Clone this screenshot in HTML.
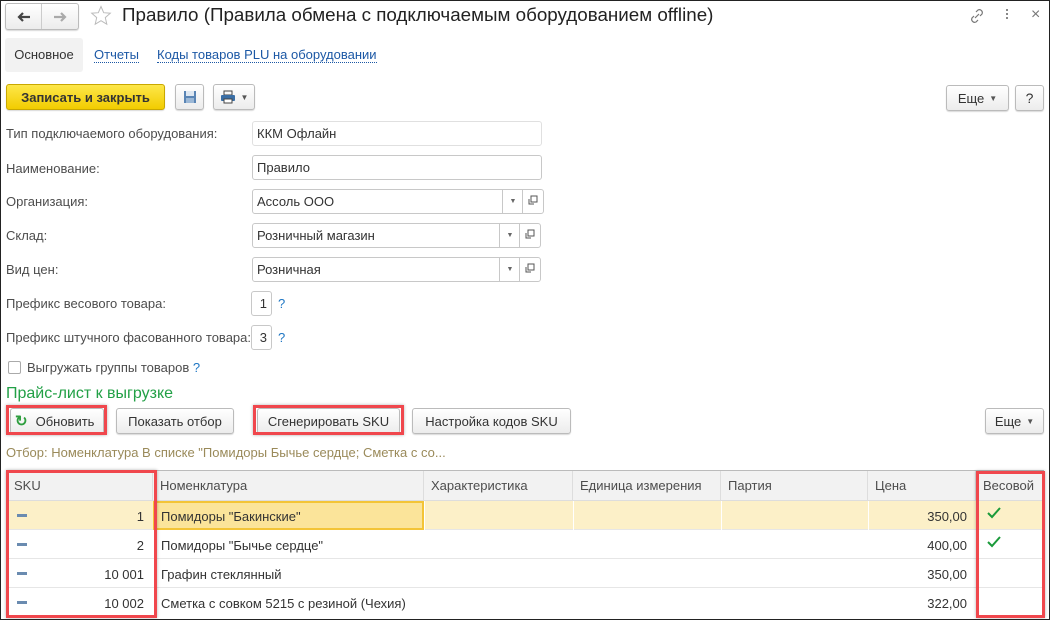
<!DOCTYPE html>
<html><head><meta charset="utf-8"><style>
*{box-sizing:border-box;margin:0;padding:0}
body{width:1050px;height:620px;overflow:hidden;background:#fff;font-family:"Liberation Sans",Arial,sans-serif;font-size:13px;color:#4d4d4d;position:relative}
.a{position:absolute;white-space:nowrap}
.frame{position:absolute;left:0;top:0;width:1050px;height:620px;border:1px solid #222;pointer-events:none;z-index:9}
.btn{position:absolute;height:26px;border:1px solid #bbb;border-radius:3px;background:linear-gradient(#fff,#ececec);box-shadow:0 1px 1px rgba(0,0,0,.15);display:flex;align-items:center;justify-content:center;color:#333;font-size:13px}
.inp{position:absolute;height:25px;border:1px solid #c8c8c8;border-radius:3px;background:#fff;padding-left:4px;line-height:23px;color:#333}
.dd{position:absolute;top:0;height:23px;border-left:1px solid #c8c8c8;width:21px}
.red{position:absolute;border:3px solid #f0474d;box-shadow:0 0 3px rgba(0,0,0,.3)}
.th{position:absolute;top:471px;height:30px;background:#f2f2f2;border-right:1px solid #ddd;border-bottom:1px solid #ddd;padding-left:7px;line-height:30px;color:#4d4d4d}
.row{position:absolute;left:7px;width:1037px;height:29px;border-bottom:1px solid #e6e6e6}
.q{color:#1f77c4}
.mark{position:absolute;left:17px;width:10px;height:3px;background:#6a8bb0}
</style></head><body>
<div class="frame"></div>
<!-- title bar -->
<div class="btn" style="left:5px;top:3px;width:74px;height:27px;padding:0"><span style="width:37px;height:25px;border-right:1px solid #ccc;display:flex;align-items:center;justify-content:center"><svg width="14" height="10" viewBox="0 0 14 10"><path d="M13 5H3M6 1L2 5l4 4" fill="none" stroke="#444" stroke-width="2.2"/></svg></span><span style="width:37px;display:flex;align-items:center;justify-content:center"><svg width="14" height="10" viewBox="0 0 14 10"><path d="M1 5h10M8 1l4 4-4 4" fill="none" stroke="#aaa" stroke-width="2.2"/></svg></span></div>
<svg class="a" style="left:90px;top:5px" width="22" height="22" viewBox="0 0 22 22"><path d="M11 1.5l2.7 6.2 6.6.5-5 4.4 1.5 6.6L11 15.7 5.2 19.2l1.5-6.6-5-4.4 6.6-.5z" fill="none" stroke="#bbb" stroke-width="1"/></svg>
<div class="a" style="left:122px;top:4px;font-size:18.8px;color:#222">Правило (Правила обмена с подключаемым оборудованием offline)</div>
<svg class="a" style="left:968px;top:7px" width="18" height="18" viewBox="0 0 18 18"><path d="M8 5l2-2a3 3 0 014 4l-2 2M10 13l-2 2a3 3 0 01-4-4l2-2M7 11l4-4" fill="none" stroke="#777" stroke-width="1.2"/></svg>
<div class="a" style="left:1006px;top:9px;width:3px"><div style="width:2px;height:2px;background:#888;margin-bottom:2px"></div><div style="width:2px;height:2px;background:#888;margin-bottom:2px"></div><div style="width:2px;height:2px;background:#888"></div></div>
<div class="a" style="left:1031px;top:6px;font-size:16px;color:#777">×</div>
<!-- tabs -->
<div class="a" style="left:5px;top:38px;width:78px;height:34px;background:#f2f2f2;border-radius:3px;line-height:34px;text-align:center;color:#333">Основное</div>
<div class="a" style="left:94px;top:48px;color:#1c58a5;border-bottom:1px dotted #1c58a5;line-height:14px">Отчеты</div>
<div class="a" style="left:157px;top:48px;color:#1c58a5;border-bottom:1px dotted #1c58a5;line-height:14px">Коды товаров PLU на оборудовании</div>
<!-- toolbar -->
<div class="btn" style="left:6px;top:84px;width:159px;background:linear-gradient(#fde74a,#f2cc00);border-color:#c9a800;font-weight:bold;color:#333">Записать и закрыть</div>
<div class="btn" style="left:175px;top:84px;width:29px"><svg width="14" height="14" viewBox="0 0 14 14"><rect x="1" y="1" width="12" height="12" fill="#5a85b5"/><rect x="3" y="1" width="8" height="5" fill="#dfe8f2"/><rect x="3" y="8" width="8" height="5" fill="#9cb8d6"/></svg></div>
<div class="btn" style="left:213px;top:84px;width:42px"><svg width="16" height="14" viewBox="0 0 16 14"><rect x="4" y="1" width="8" height="4" fill="none" stroke="#444"/><rect x="1" y="5" width="14" height="6" rx="1" fill="#3a6ea5"/><rect x="4" y="9" width="8" height="4" fill="#fff" stroke="#444"/></svg><span style="font-size:8px;margin-left:5px;color:#555">▼</span></div>
<div class="btn" style="left:946px;top:85px;width:63px">Еще <span style="font-size:8px;margin-left:5px;color:#555">▼</span></div>
<div class="btn" style="left:1015px;top:85px;width:29px;font-size:14px">?</div>
<!-- fields -->
<div class="a" style="left:6px;top:126px">Тип подключаемого оборудования:</div>
<div class="inp" style="left:252px;top:121px;width:290px;border-color:#e0e0e0">ККМ Офлайн</div>
<div class="a" style="left:6px;top:161px">Наименование:</div>
<div class="inp" style="left:252px;top:155px;width:290px">Правило</div>
<div class="a" style="left:6px;top:194px">Организация:</div>
<div class="inp" style="left:252px;top:189px;width:292px">Ассоль ООО<div class="dd" style="left:249px;text-align:center;font-size:7px;color:#666">▼</div><div class="dd" style="left:269px"><svg width="20" height="22" viewBox="0 0 20 22"><rect x="8" y="6" width="6" height="6" fill="none" stroke="#555"/><path d="M6 9v5h5" fill="none" stroke="#555"/></svg></div></div>
<div class="a" style="left:6px;top:228px">Склад:</div>
<div class="inp" style="left:252px;top:223px;width:289px">Розничный магазин<div class="dd" style="left:246px;text-align:center;font-size:7px;color:#666">▼</div><div class="dd" style="left:266px"><svg width="20" height="22" viewBox="0 0 20 22"><rect x="8" y="6" width="6" height="6" fill="none" stroke="#555"/><path d="M6 9v5h5" fill="none" stroke="#555"/></svg></div></div>
<div class="a" style="left:6px;top:262px">Вид цен:</div>
<div class="inp" style="left:252px;top:257px;width:289px">Розничная<div class="dd" style="left:246px;text-align:center;font-size:7px;color:#666">▼</div><div class="dd" style="left:266px"><svg width="20" height="22" viewBox="0 0 20 22"><rect x="8" y="6" width="6" height="6" fill="none" stroke="#555"/><path d="M6 9v5h5" fill="none" stroke="#555"/></svg></div></div>
<div class="a" style="left:6px;top:296px">Префикс весового товара:</div>
<div class="inp" style="left:251px;top:291px;width:21px;padding:0 4px 0 0;text-align:right">1</div>
<div class="a q" style="left:278px;top:296px">?</div>
<div class="a" style="left:6px;top:330px">Префикс штучного фасованного товара:</div>
<div class="inp" style="left:251px;top:325px;width:21px;padding:0 4px 0 0;text-align:right">3</div>
<div class="a q" style="left:278px;top:330px">?</div>
<div class="a" style="left:8px;top:361px;width:13px;height:13px;border:1px solid #aaa;border-radius:2px"></div>
<div class="a" style="left:27px;top:360px">Выгружать группы товаров <span class="q">?</span></div>
<!-- price list -->
<div class="a" style="left:6px;top:385px;font-size:16px;color:#22a046">Прайс-лист к выгрузке</div>
<div class="btn" style="left:10px;top:408px;width:94px;justify-content:flex-start;padding-left:4px"><span style="color:#2e9e3e;font-weight:bold;font-size:15px;margin-right:8px">&#8635;</span>Обновить</div>
<div class="red" style="left:6px;top:405px;width:101px;height:30px"></div>
<div class="btn" style="left:116px;top:408px;width:118px">Показать отбор</div>
<div class="btn" style="left:257px;top:408px;width:143px">Сгенерировать SKU</div>
<div class="red" style="left:253px;top:405px;width:151px;height:30px"></div>
<div class="btn" style="left:412px;top:408px;width:159px">Настройка кодов SKU</div>
<div class="btn" style="left:985px;top:408px;width:59px">Еще <span style="font-size:8px;margin-left:5px;color:#555">▼</span></div>
<div class="a" style="left:6px;top:445px;color:#9a8a5a">Отбор: Номенклатура В списке "Помидоры Бычье сердце; Сметка с со...</div>
<!-- table -->
<div class="a" style="left:7px;top:470px;width:1037px;height:1px;background:#bbb"></div>
<div class="th" style="left:7px;width:146px">SKU</div>
<div class="th" style="left:153px;width:271px">Номенклатура</div>
<div class="th" style="left:424px;width:149px">Характеристика</div>
<div class="th" style="left:573px;width:148px">Единица измерения</div>
<div class="th" style="left:721px;width:147px">Партия</div>
<div class="th" style="left:868px;width:108px">Цена</div>
<div class="th" style="left:976px;width:68px">Весовой</div>

<div class="row" style="top:501px;background:#fcf0c8"></div>
<div class="a" style="left:153px;top:501px;width:271px;height:29px;background:#fbe49a;border:2px solid #f3c437"></div>
<div class="a" style="left:424px;top:501px;width:1px;height:29px;background:#fff"></div>
<div class="a" style="left:573px;top:501px;width:1px;height:29px;background:#fff"></div>
<div class="a" style="left:721px;top:501px;width:1px;height:29px;background:#fff"></div>
<div class="a" style="left:868px;top:501px;width:1px;height:29px;background:#fff"></div>
<div class="row" style="top:530px"></div>
<div class="row" style="top:559px"></div>
<div class="row" style="top:588px;border-bottom:none"></div>

<div class="mark" style="top:514px"></div><div class="mark" style="top:543px"></div><div class="mark" style="top:572px"></div><div class="mark" style="top:601px"></div>
<div class="a" style="left:60px;top:509px;width:84px;text-align:right;color:#333">1</div>
<div class="a" style="left:60px;top:538px;width:84px;text-align:right;color:#333">2</div>
<div class="a" style="left:60px;top:567px;width:84px;text-align:right;color:#333">10 001</div>
<div class="a" style="left:60px;top:596px;width:84px;text-align:right;color:#333">10 002</div>
<div class="a" style="left:161px;top:509px;color:#333">Помидоры "Бакинские"</div>
<div class="a" style="left:161px;top:538px;color:#333">Помидоры "Бычье сердце"</div>
<div class="a" style="left:161px;top:567px;color:#333">Графин стеклянный</div>
<div class="a" style="left:161px;top:596px;color:#333">Сметка с совком 5215 с резиной (Чехия)</div>
<div class="a" style="left:880px;top:509px;width:87px;text-align:right;color:#333">350,00</div>
<div class="a" style="left:880px;top:538px;width:87px;text-align:right;color:#333">400,00</div>
<div class="a" style="left:880px;top:567px;width:87px;text-align:right;color:#333">350,00</div>
<div class="a" style="left:880px;top:596px;width:87px;text-align:right;color:#333">322,00</div>
<svg class="a" style="left:987px;top:507px" width="14" height="12" viewBox="0 0 14 12"><path d="M1 6l4 4 8-9" fill="none" stroke="#1a9a3a" stroke-width="2"/></svg>
<svg class="a" style="left:987px;top:536px" width="14" height="12" viewBox="0 0 14 12"><path d="M1 6l4 4 8-9" fill="none" stroke="#1a9a3a" stroke-width="2"/></svg>
<div class="red" style="left:6px;top:470px;width:151px;height:148px"></div>
<div class="red" style="left:976px;top:471px;width:69px;height:147px"></div>
</body></html>
